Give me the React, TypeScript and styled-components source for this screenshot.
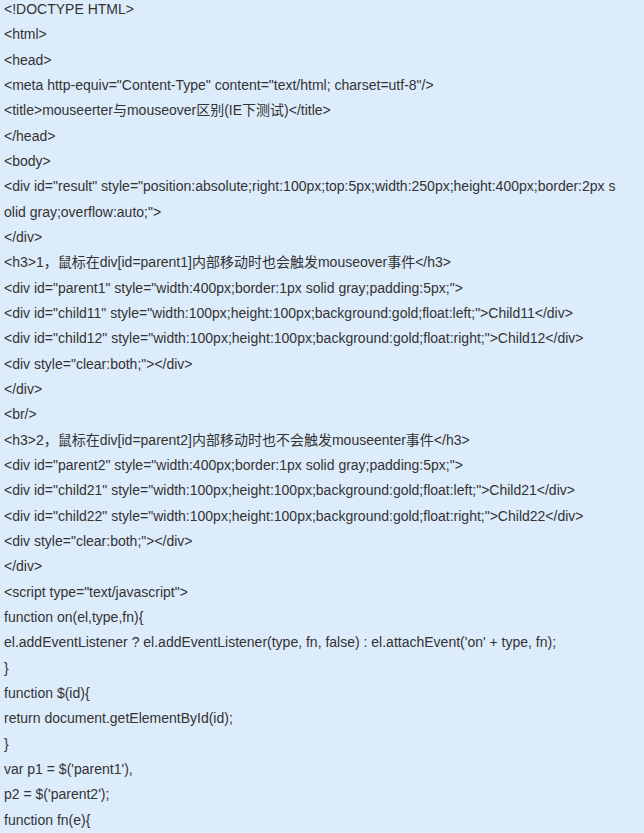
import React from "react";
import styled, { createGlobalStyle } from "styled-components";

const Global = createGlobalStyle`
  html, body { margin: 0; padding: 0; background: #ddecfb; }
  body { width: 644px; height: 833px; overflow: hidden; }
`;

const Listing = styled.div`
  background: #ddecfb;
  width: 644px;
  height: 833px;
  box-sizing: border-box;
  padding: 0 0 0 4px;
  font-family: "Liberation Sans", "Noto Sans CJK SC", sans-serif;
  font-size: 14px;
  color: #333333;
  overflow: hidden;
`;

const Line = styled.div`
  height: 25.34px;
  line-height: 19px;
  white-space: pre;
`;

const lines = [
  "<!DOCTYPE HTML>",
  "<html>",
  "<head>",
  '<meta http-equiv="Content-Type" content="text/html; charset=utf-8"/>',
  "<title>mouseerter与mouseover区别(IE下测试)</title>",
  "</head>",
  "<body>",
  '<div id="result" style="position:absolute;right:100px;top:5px;width:250px;height:400px;border:2px s',
  'olid gray;overflow:auto;">',
  "</div>",
  "<h3>1，鼠标在div[id=parent1]内部移动时也会触发mouseover事件</h3>",
  '<div id="parent1" style="width:400px;border:1px solid gray;padding:5px;">',
  '<div id="child11" style="width:100px;height:100px;background:gold;float:left;">Child11</div>',
  '<div id="child12" style="width:100px;height:100px;background:gold;float:right;">Child12</div>',
  '<div style="clear:both;"></div>',
  "</div>",
  "<br/>",
  "<h3>2，鼠标在div[id=parent2]内部移动时也不会触发mouseenter事件</h3>",
  '<div id="parent2" style="width:400px;border:1px solid gray;padding:5px;">',
  '<div id="child21" style="width:100px;height:100px;background:gold;float:left;">Child21</div>',
  '<div id="child22" style="width:100px;height:100px;background:gold;float:right;">Child22</div>',
  '<div style="clear:both;"></div>',
  "</div>",
  '<script type="text/javascript">',
  "function on(el,type,fn){",
  "el.addEventListener ? el.addEventListener(type, fn, false) : el.attachEvent('on' + type, fn);",
  "}",
  "function $(id){",
  "return document.getElementById(id);",
  "}",
  "var p1 = $('parent1'),",
  "p2 = $('parent2');",
  "function fn(e){",
];

export default function App() {
  return (
    <>
      <Global />
      <Listing>
        {lines.map((l, i) => (
          <Line key={i}>{l}</Line>
        ))}
      </Listing>
    </>
  );
}
